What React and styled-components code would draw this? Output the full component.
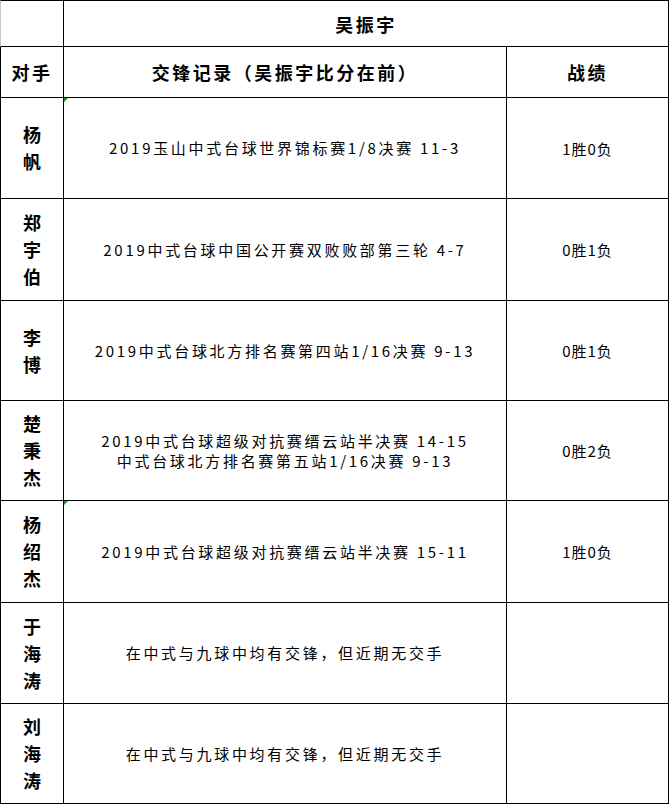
import React from 'react';
import styled, { createGlobalStyle } from 'styled-components';

const Global = createGlobalStyle`
  html, body {
    margin: 0;
    padding: 0;
    background: #ffffff;
  }
  body {
    font-family: "Noto Sans CJK SC", "Liberation Serif", sans-serif;
    color: #000;
  }
`;

const Sheet = styled.div`
  display: grid;
  grid-template-columns: 64px 443px 162px;
  grid-template-rows: 47px 51px 101px 102px 100px 100px 102px 101px 100px;
  width: 669px;
`;

const Cell = styled.div`
  box-sizing: border-box;
  position: relative;
  display: flex;
  align-items: center;
  justify-content: center;
  text-align: center;
  border-right: 1px solid #000;
  border-bottom: 1px solid #000;
  border-top: ${p => (p.$top ? '1px solid #000' : 'none')};
  border-left: ${p => (p.$first ? `1px solid ${p.$pale ? '#c8c8c8' : '#000'}` : 'none')};
  grid-column: ${p => p.$span || 'auto'};
`;

const HeadText = styled.span`
  font-size: 18px;
  font-weight: 700;
  letter-spacing: 2.5px;
`;

const NameStack = styled.div`
  display: flex;
  flex-direction: column;
  align-items: center;
  font-size: 18px;
  font-weight: 700;
  line-height: 27px;
`;

const Record = styled.div`
  font-size: 15px;
  letter-spacing: 2.7px;
  line-height: 20px;
`;

const Score = styled.span`
  font-size: 15px;
  letter-spacing: 1px;
`;

const Marker = styled.span`
  position: absolute;
  top: 0;
  left: 0;
  width: 0;
  height: 0;
  border-top: 4px solid #1f8a1f;
  border-right: 4px solid transparent;
`;

const rows = [
  { name: '杨帆', records: ['2019玉山中式台球世界锦标赛1/8决赛 11-3'], score: '1胜0负', mark: true },
  { name: '郑宇伯', records: ['2019中式台球中国公开赛双败败部第三轮 4-7'], score: '0胜1负' },
  { name: '李博', records: ['2019中式台球北方排名赛第四站1/16决赛 9-13'], score: '0胜1负' },
  {
    name: '楚秉杰',
    records: ['2019中式台球超级对抗赛缙云站半决赛 14-15', '中式台球北方排名赛第五站1/16决赛 9-13'],
    score: '0胜2负',
  },
  { name: '杨绍杰', records: ['2019中式台球超级对抗赛缙云站半决赛 15-11'], score: '1胜0负', mark: true },
  { name: '于海涛', records: ['在中式与九球中均有交锋，但近期无交手'], score: '' },
  { name: '刘海涛', records: ['在中式与九球中均有交锋，但近期无交手'], score: '' },
];

export default function App() {
  return (
    <>
      <Global />
      <Sheet>
        <Cell $top $first $pale />
        <Cell $top $span="2 / 4">
          <HeadText>吴振宇</HeadText>
        </Cell>

        <Cell $first>
          <HeadText>对手</HeadText>
        </Cell>
        <Cell>
          <HeadText>交锋记录（吴振宇比分在前）</HeadText>
        </Cell>
        <Cell>
          <HeadText>战绩</HeadText>
        </Cell>

        {rows.map(r => (
          <React.Fragment key={r.name}>
            <Cell $first>
              <NameStack>
                {r.name.split('').map((c, i) => (
                  <span key={i}>{c}</span>
                ))}
              </NameStack>
            </Cell>
            <Cell>
              {r.mark && <Marker />}
              <Record>
                {r.records.map(t => (
                  <div key={t}>{t}</div>
                ))}
              </Record>
            </Cell>
            <Cell>
              <Score>{r.score}</Score>
            </Cell>
          </React.Fragment>
        ))}
      </Sheet>
    </>
  );
}
